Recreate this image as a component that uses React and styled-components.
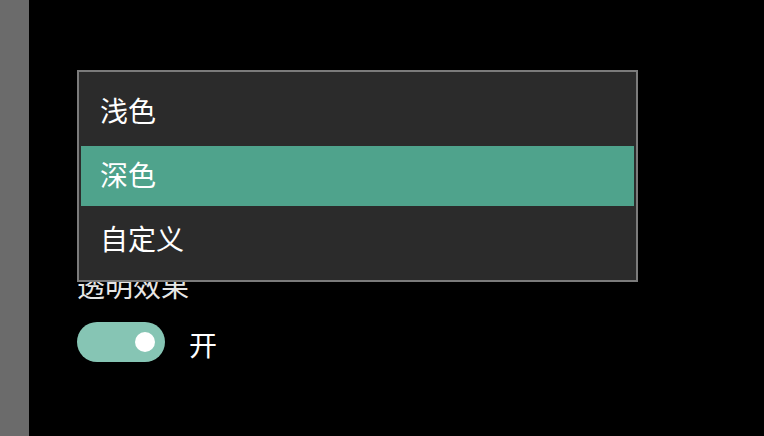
import React, { useState } from 'react'
import styled, { createGlobalStyle } from 'styled-components'

const GlobalStyle = createGlobalStyle`
  html, body {
    margin: 0;
    padding: 0;
    background: #000;
  }
  body {
    font-family: "Segoe UI", "Noto Sans CJK SC", "Noto Sans", sans-serif;
  }
`

const Page = styled.div`
  display: flex;
  width: 100%;
  height: 436px;
  overflow: hidden;
  background: #000;
`

const Sidebar = styled.div`
  width: 29px;
  flex-shrink: 0;
  background: #6b6b6b;
`

const Main = styled.div`
  flex: 1;
  position: relative;
  padding: 267px 0 0 48px;
  display: flex;
  flex-direction: column;
`

const SettingLabel = styled.div`
  font-family: "Noto Sans CJK SC", sans-serif;
  font-size: 28px;
  line-height: 36px;
  color: #e6e6e6;
`

const ToggleRow = styled.div`
  display: flex;
  align-items: center;
  gap: 24px;
  margin-top: 19px;
`

const Toggle = styled.button`
  width: 88px;
  height: 40px;
  border: none;
  border-radius: 20px;
  padding: 0 10px;
  background: ${props => (props.on ? '#86c5b4' : '#444')};
  display: flex;
  align-items: center;
  justify-content: ${props => (props.on ? 'flex-end' : 'flex-start')};
  cursor: pointer;
`

const Knob = styled.span`
  width: 20px;
  height: 20px;
  border-radius: 50%;
  background: #fff;
`

const ToggleText = styled.span`
  font-family: "Noto Sans CJK SC", sans-serif;
  font-size: 28px;
  line-height: 36px;
  padding-top: 3px;
  color: #fff;
`

const Menu = styled.ul`
  position: absolute;
  top: 70px;
  left: 48px;
  width: 561px;
  box-sizing: border-box;
  margin: 0;
  padding: 10px 2px;
  list-style: none;
  display: flex;
  flex-direction: column;
  gap: 4px;
  background: #2b2b2b;
  border: 2px solid #7b7b7b;
`

const MenuItem = styled.li`
  height: 60px;
  box-sizing: border-box;
  padding: 0 0 4px 19px;
  display: flex;
  align-items: center;
  font-family: "Noto Sans CJK SC", sans-serif;
  font-size: 28px;
  color: #fff;
  background: ${props => (props.selected ? '#4fa38c' : 'transparent')};
  cursor: pointer;
`

const options = ['浅色', '深色', '自定义']

const App = () => {
  const [theme, setTheme] = useState('深色')
  const [transparent, setTransparent] = useState(true)

  return (
    <>
      <GlobalStyle />
      <Page>
        <Sidebar />
        <Main>
          <SettingLabel>透明效果</SettingLabel>
          <ToggleRow>
            <Toggle on={transparent ? 1 : 0} onClick={() => setTransparent(!transparent)}>
              <Knob />
            </Toggle>
            <ToggleText>{transparent ? '开' : '关'}</ToggleText>
          </ToggleRow>
          <Menu>
            {options.map(o => (
              <MenuItem key={o} selected={theme === o} onClick={() => setTheme(o)}>
                {o}
              </MenuItem>
            ))}
          </Menu>
        </Main>
      </Page>
    </>
  )
}

export default App
